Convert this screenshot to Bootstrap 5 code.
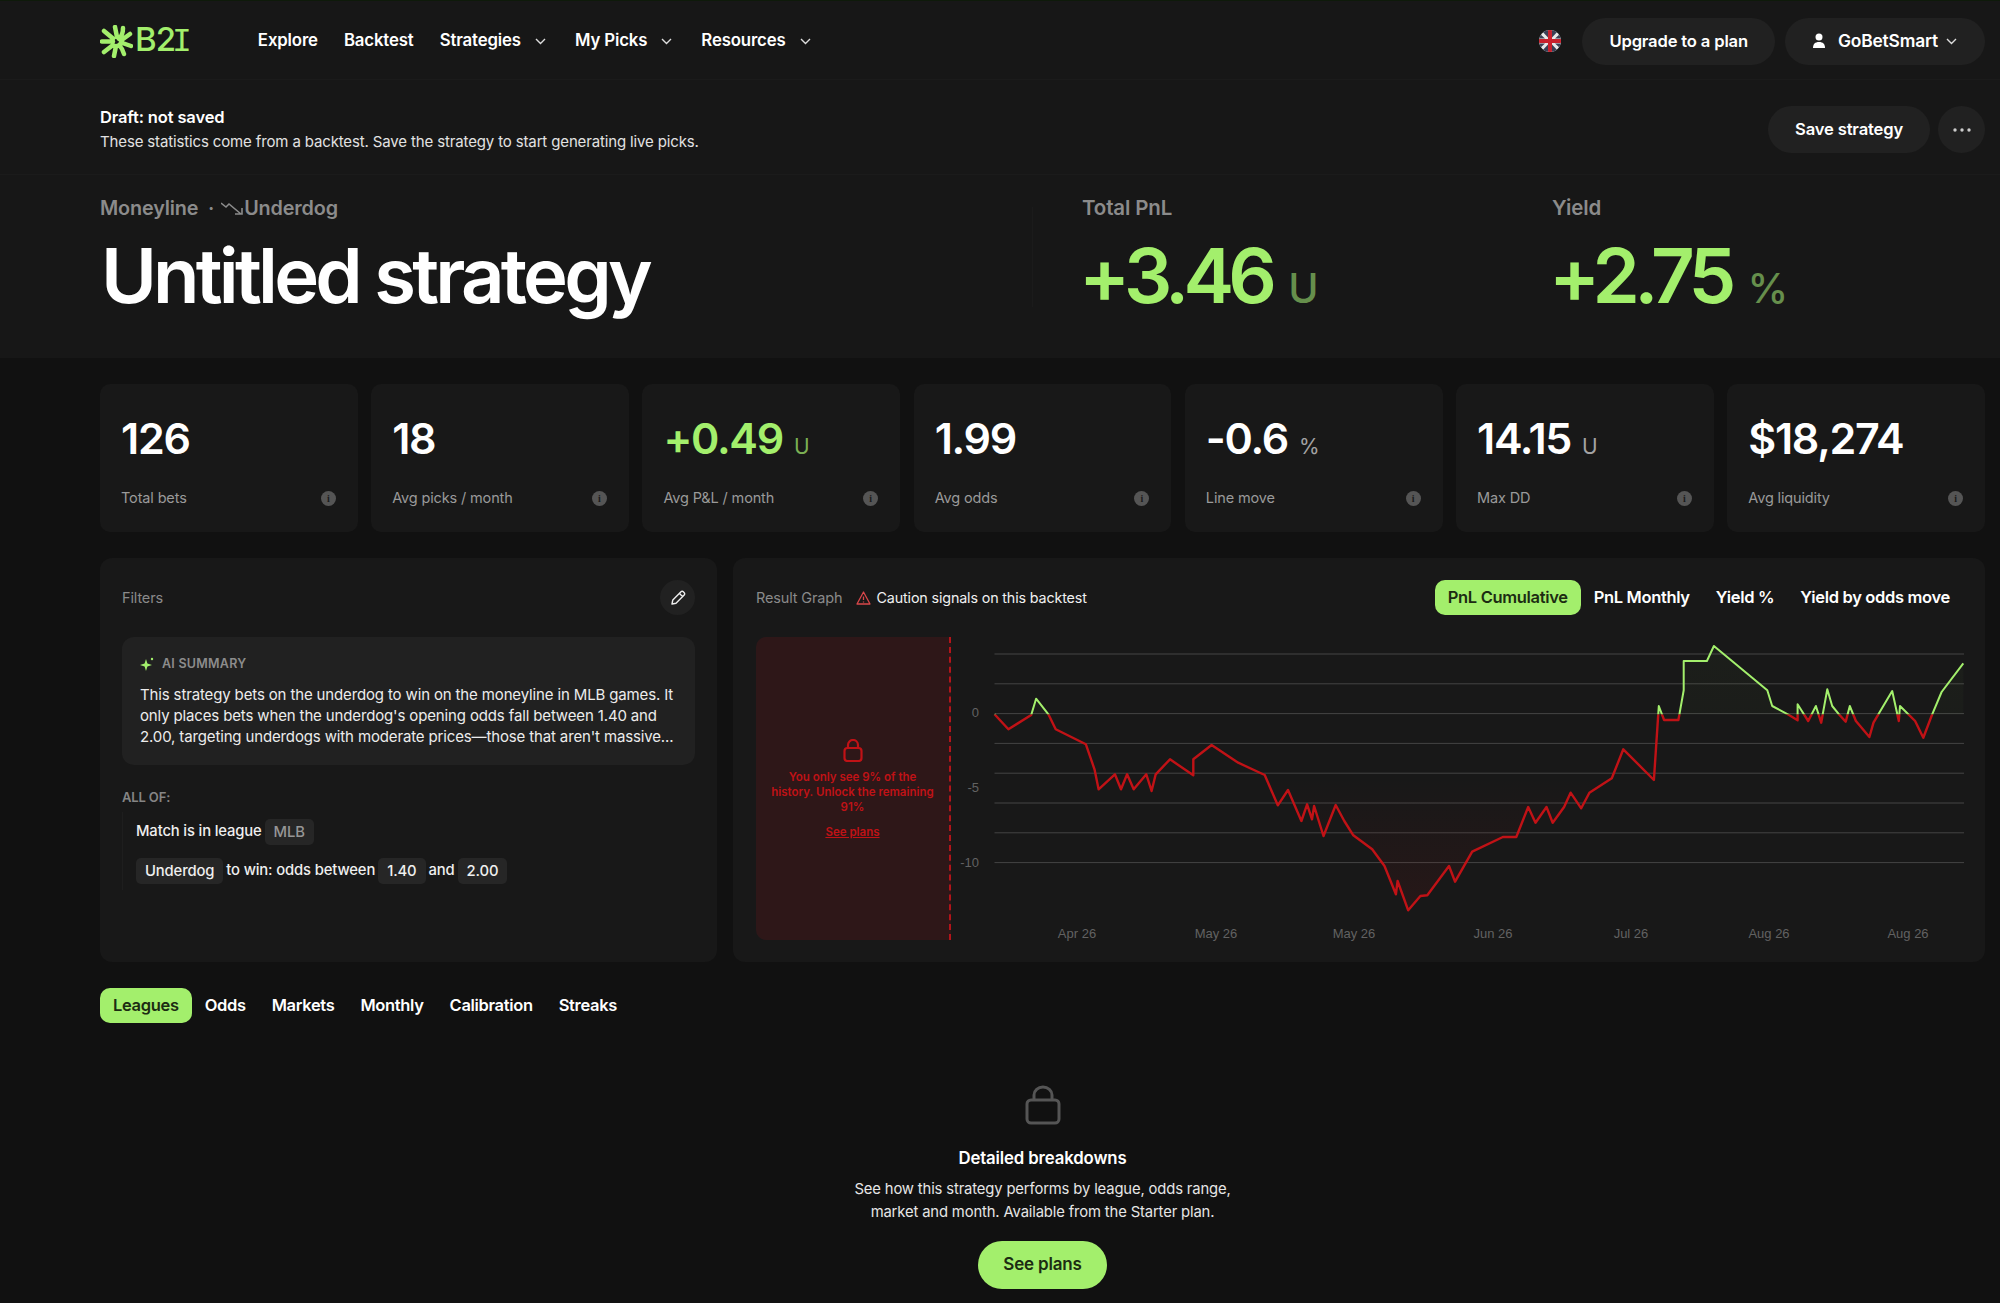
<!DOCTYPE html>
<html lang="en">
<head>
    <meta charset="UTF-8">
    <meta name="viewport" content="width=device-width, initial-scale=1.0">
    <title>Untitled strategy - B2I</title>
    <link href="https://cdn.jsdelivr.net/npm/bootstrap@5.3.3/dist/css/bootstrap.min.css" rel="stylesheet">
    <script src="https://cdn.jsdelivr.net/npm/bootstrap@5.3.3/dist/js/bootstrap.bundle.min.js"></script>
    <style>
        body { background: #111; color: #fff; font-family: Inter, "Liberation Sans", sans-serif; font-size: 14px; letter-spacing: -.01em; }
        .head-zone { background: #171717; border-top: 1px solid #0e1a0a; }
        .top-bar { height: 79px; padding: 2px 15px 0 100px; border-bottom: 1px solid #1b1b1b; flex-wrap: nowrap; }
        .brand-mark { width: 33px; height: 33px; }
        .brand-name { font-size: 33px; font-weight: 500; color: #a3ef6c; letter-spacing: -.03em; line-height: 1; margin-left: 2px; }
        .brand-name span { font-family: "Liberation Mono", monospace; font-weight: 400; margin-left: -3px; }
        .top-links { margin-left: 67px; gap: 26px; }
        .top-link { color: #fff; font-size: 16.8px; font-weight: 600; text-decoration: none; display: flex; align-items: center; gap: 14px; }
        .chev { width: 11px; height: 7px; }
        .top-link .chev { margin-right: 3px; }
        .pill-dark { background: #212121; color: #fff; border: 0; font-size: 16.6px; font-weight: 600; letter-spacing: -.01em; height: 47px; padding: 0 27px; }
        .pill-dark:hover { background: #2a2a2a; color: #fff; }
        .user-btn { margin-left: 10px; padding: 0 28px 0 27px; font-size: 17.4px; }
        .flag-icon { width: 22px; height: 22px; margin-right: 21px; }
        .draft-row { height: 95px; padding: 4px 15px 0 100px; border-bottom: 1px solid #1b1b1b; }
        .draft-title { font-size: 16.5px; font-weight: 600; line-height: 25px; }
        .draft-text { font-size: 15px; color: #e2e2e2; line-height: 23px; }
        .dots-btn { width: 47px; padding: 0; }
        .hero-zone { height: 183px; padding: 20px 15px 0 100px; }
        .hero-left { width: 932px; }
        .hero-right { width: 520px; padding-left: 49px; border-left: 1px solid #1b1b1b; height: 100px; margin-top: 12px; }
        .hero-plain { height: 100px; margin-top: 12px; }
        .hero-label { font-size: 19.8px; font-weight: 600; color: #8b8b8b; line-height: 26px; }
        .hero-right .hero-label, .hero-plain .hero-label { margin-top: -12px; font-size: 20.5px; }
        .hero-title { font-size: 76px; font-weight: 600; letter-spacing: -.05em; line-height: 88px; margin: 10px 0 0 1px; }
        .hero-num { font-size: 76px; font-weight: 600; letter-spacing: -.075em; line-height: 88px; color: #a3ef6c; margin: 10px 0 0 -3px; white-space: nowrap; }
        .hero-unit { font-size: 41px; font-weight: 500; color: #668f4c; letter-spacing: 0; margin-left: 17px; }
        .down-icon { width: 23px; height: 14px; margin: 0 0 0 7px; }
        .page-zone { padding: 26px 15px 0 100px; }
        .stat-row { display: grid; grid-template-columns: repeat(7, 1fr); gap: 13.5px; }
        .stat-box { background: #181818; border-radius: 10px; height: 148px; padding: 29px 21px 0; }
        .stat-num { font-size: 43px; font-weight: 600; letter-spacing: -.03em; line-height: 50px; height: 50px; white-space: nowrap; }
        .stat-num.up { color: #a3ef6c; }
        .stat-unit { font-size: 21px; font-weight: 400; letter-spacing: 0; line-height: 1; color: #a3a3a3; margin-left: 11px; }
        .up .stat-unit { color: #7bb054; }
        .stat-label { font-size: 14.5px; color: #9a9a9a; margin-top: 24px; line-height: 22px; padding-right: 1px; }
        .info-dot { width: 15px; height: 15px; border-radius: 50%; background: #555; color: #1b1b1b; font-size: 10px; font-weight: 800; line-height: 15px; text-align: center; font-family: "Liberation Serif", serif; }
        .panel-row { display: flex; gap: 16px; margin-top: 26px; height: 404px; }
        .panel-box { background: #181818; border-radius: 12px; }
        .filter-panel { width: 617px; padding: 22px 22px 0; flex: none; }
        .graph-panel { flex: 1; padding: 22px 0 0 23px; min-width: 0; }
        .panel-cap { height: 35px; }
        .muted-cap { color: #8a8a8a; font-size: 14.5px; }
        .edit-btn { width: 35px; height: 35px; border-radius: 50%; background: #212121; border: 0; }
        .ai-box { background: #212121; border-radius: 12px; height: 128px; margin-top: 22px; padding: 17px 18px 0; }
        .ai-head { font-size: 12.5px; font-weight: 600; color: #8c8c8c; letter-spacing: .02em; line-height: 20px; gap: 8px; }
        .ai-text { font-size: 15px; line-height: 21px; color: #ececec; margin-top: 10px; white-space: nowrap; }
        .all-of { font-size: 13px; font-weight: 600; color: #858585; margin-top: 23px; line-height: 18px; }
        .cond-list { margin-top: 6px; padding-left: 13px; border-left: 1px solid #1e1e1e; }
        .cond-line { font-weight: 500; font-size: 14.8px; height: 39px; gap: 3px; color: #efefef; }
        .cond-chip { background: #262626; border-radius: 5px; height: 26px; line-height: 26px; padding: 0 9px; }
        .cond-chip.dim { color: #969696; }
        .graph-tab { background: transparent; border: 0; color: #fff; font-size: 16.5px; font-weight: 600; height: 35px; padding: 0 13px; border-radius: 10px; letter-spacing: -.02em; white-space: nowrap; }
        .graph-tab.on { background: #a3ef6c; color: #1c2c12; }
        .graph-tabs { margin-right: 22px; }
        .warn-line { gap: 6px; margin-left: 13px; color: #f0f0f0; font-size: 14.3px; }
        .chart-row { margin-top: 22px; height: 303px; }
        .lock-zone { width: 195px; height: 303px; flex: none; background: #2e1718; border-right: 2px dashed #b3141a; border-radius: 10px 0 0 10px; color: #c01216; font-size: 11.5px; font-weight: 600; line-height: 15px; text-align: center; padding: 102px 12px 0 12px; letter-spacing: 0; }
        .lock-zone a { color: #c01216; display: block; margin-top: 10px; }
        .chart-svg { width: 1034px; height: 325px; flex: none; display: block; }
        .chart-svg text { font-family: "Liberation Sans", sans-serif; font-size: 13px; fill: #626262; letter-spacing: 0; }
        .tab-row { margin-top: 26px; }
        .locked-note { margin: 0 auto; width: 400px; padding-top: 62px; text-align: center; }
        .note-title { font-size: 16.8px; font-weight: 600; margin-top: 21px; line-height: 24px; }
        .note-text { font-size: 14.8px; line-height: 23px; color: #e6e6e6; margin-top: 8px; }
        .plans-btn { background: #a3ef6c; color: #1c2c12; border: 0; height: 48px; width: 129px; font-size: 17px; font-weight: 600; margin-top: 17px; letter-spacing: -.01em; }
        .plans-btn:hover { background: #a3ef6c; color: #1c2c12; }
    </style>
</head>
<body>
    <div class="head-zone">
        <nav class="navbar top-bar">
            <a class="d-flex align-items-center text-decoration-none" href="#">
                <svg class="brand-mark" viewBox="0 0 33 33" fill="none" stroke="#a3ef6c" stroke-width="4.500" stroke-linecap="round" stroke-linejoin="round">
                    <path d="M2 16.500H13M4 6l9 7.500M4 27l9-7M15 2l2 10M23 3c0 5-1 8-4 11M30 9l-9 6.500M31 21l-10-3.500M24 29c-1-4-3-7-5-9M14 31l2-10"/>
                </svg>
                <span class="brand-name">B2<span>I</span></span>
            </a>
            <div class="d-flex align-items-center top-links me-auto">
                <a class="top-link" href="#">Explore</a>
                <a class="top-link" href="#">Backtest</a>
                <a class="top-link" href="#">Strategies <svg class="chev" viewBox="0 0 11 7" fill="none" stroke="#ddd" stroke-width="1.400"><path d="M1 1l4.500 4.500L10 1"/></svg></a>
                <a class="top-link" href="#">My Picks <svg class="chev" viewBox="0 0 11 7" fill="none" stroke="#ddd" stroke-width="1.400"><path d="M1 1l4.500 4.500L10 1"/></svg></a>
                <a class="top-link" href="#">Resources <svg class="chev" viewBox="0 0 11 7" fill="none" stroke="#ddd" stroke-width="1.400"><path d="M1 1l4.500 4.500L10 1"/></svg></a>
            </div>
            <svg class="flag-icon" viewBox="0 0 22 22">
                <clipPath id="flagClip"><circle cx="11" cy="11" r="11"/></clipPath>
                <g clip-path="url(#flagClip)">
                    <rect width="22" height="22" fill="#e8e8e8"/>
                    <path d="M2 0l7 7.500V0zM20 0l-7 7.500V0zM2 22l7-7.500V22zM20 22l-7-7.500V22zM0 3l6 5.500H0zM22 3l-6 5.500h6zM0 19l6-5.500H0zM22 19l-6-5.500h6z" fill="#3a3f55"/>
                    <path d="M9 0h4v9h9v4h-9v9H9v-9H0V9h9z" fill="#c8202c"/>
                </g>
            </svg>
            <button class="btn rounded-pill pill-dark">Upgrade to a plan</button>
            <button class="btn rounded-pill pill-dark user-btn d-flex align-items-center">
                <svg width="14" height="16" viewBox="0 0 14 16" fill="#fff" class="me-2"><circle cx="7" cy="4" r="3.500"/><path d="M1 15c0-4 2-6 6-6s6 2 6 6z"/></svg>
                <span class="ms-1">GoBetSmart</span>
                <svg class="chev ms-2" viewBox="0 0 11 7" fill="none" stroke="#ddd" stroke-width="1.400"><path d="M1 1l4.500 4.500L10 1"/></svg>
            </button>
        </nav>

        <div class="d-flex align-items-center justify-content-between draft-row">
            <div>
                <div class="draft-title">Draft: not saved</div>
                <div class="draft-text">These statistics come from a backtest. Save the strategy to start generating live picks.</div>
            </div>
            <div class="d-flex gap-2 align-items-center">
                <button class="btn rounded-pill pill-dark">Save strategy</button>
                <button class="btn rounded-circle pill-dark dots-btn">
                    <svg width="18" height="4" viewBox="0 0 18 4" fill="#ccc"><circle cx="2" cy="2" r="1.700"/><circle cx="9" cy="2" r="1.700"/><circle cx="16" cy="2" r="1.700"/></svg>
                </button>
            </div>
        </div>

        <div class="d-flex hero-zone">
            <div class="hero-left">
                <div class="hero-label d-flex align-items-center">Moneyline &nbsp;·<svg class="down-icon" viewBox="0 0 23 14" fill="none" stroke="#8b8b8b" stroke-width="1.600"><path d="M0 2l5 4 3-3 12 10M14 13h7V7"/></svg>Underdog</div>
                <h1 class="hero-title">Untitled strategy</h1>
            </div>
            <div class="hero-right">
                <div class="hero-label">Total PnL</div>
                <div class="hero-num">+3.46<span class="hero-unit">U</span></div>
            </div>
            <div class="hero-plain">
                <div class="hero-label">Yield</div>
                <div class="hero-num">+2.75<span class="hero-unit">%</span></div>
            </div>
        </div>
    </div>

    <div class="page-zone">
        <div class="stat-row">
            <div class="stat-box"><div class="stat-num">126</div><div class="d-flex justify-content-between align-items-center stat-label">Total bets<span class="info-dot">i</span></div></div>
            <div class="stat-box"><div class="stat-num">18</div><div class="d-flex justify-content-between align-items-center stat-label">Avg picks / month<span class="info-dot">i</span></div></div>
            <div class="stat-box"><div class="stat-num up">+0.49<span class="stat-unit">U</span></div><div class="d-flex justify-content-between align-items-center stat-label">Avg P&amp;L / month<span class="info-dot">i</span></div></div>
            <div class="stat-box"><div class="stat-num">1.99</div><div class="d-flex justify-content-between align-items-center stat-label">Avg odds<span class="info-dot">i</span></div></div>
            <div class="stat-box"><div class="stat-num">-0.6<span class="stat-unit">%</span></div><div class="d-flex justify-content-between align-items-center stat-label">Line move<span class="info-dot">i</span></div></div>
            <div class="stat-box"><div class="stat-num">14.15<span class="stat-unit">U</span></div><div class="d-flex justify-content-between align-items-center stat-label">Max DD<span class="info-dot">i</span></div></div>
            <div class="stat-box"><div class="stat-num">$18,274</div><div class="d-flex justify-content-between align-items-center stat-label">Avg liquidity<span class="info-dot">i</span></div></div>
        </div>

        <div class="panel-row">
            <div class="panel-box filter-panel">
                <div class="d-flex justify-content-between align-items-center panel-cap">
                    <span class="muted-cap">Filters</span>
                    <button class="edit-btn d-flex align-items-center justify-content-center p-0">
                        <svg width="16" height="16" viewBox="0 0 16 16" fill="none" stroke="#eee" stroke-width="1.400" stroke-linejoin="round"><path d="M2 14l.8-4L11 1.800a1.600 1.600 0 0 1 2.300 0l.9.9a1.600 1.600 0 0 1 0 2.300L6 13.200zM9.500 3.500l3 3"/></svg>
                    </button>
                </div>
                <div class="ai-box">
                    <div class="d-flex align-items-center ai-head">
                        <svg width="14" height="14" viewBox="0 0 14 14" fill="#a3ef6c"><path d="M6 2l1.400 4.600L12 8 7.400 9.400 6 14 4.600 9.400 0 8l4.600-1.400z"/><circle cx="12" cy="2" r="1.200"/></svg>
                        AI SUMMARY
                    </div>
                    <div class="ai-text">This strategy bets on the underdog to win on the moneyline in MLB games. It<br>only places bets when the underdog's opening odds fall between 1.40 and<br>2.00, targeting underdogs with moderate prices—those that aren't massive...</div>
                </div>
                <div class="all-of">ALL OF:</div>
                <div class="cond-list">
                    <div class="d-flex align-items-center cond-line">Match is in league <span class="cond-chip dim">MLB</span></div>
                    <div class="d-flex align-items-center cond-line"><span class="cond-chip">Underdog</span> to win: odds between <span class="cond-chip">1.40</span> and <span class="cond-chip">2.00</span></div>
                </div>
            </div>

            <div class="panel-box graph-panel">
                <div class="d-flex align-items-center panel-cap">
                    <span class="muted-cap">Result Graph</span>
                    <span class="d-flex align-items-center warn-line">
                        <svg width="15" height="14" viewBox="0 0 15 14" fill="none" stroke="#d8474a" stroke-width="1.300" stroke-linejoin="round"><path d="M7.500 1L14 13H1zM7.500 5.500v3.500M7.500 10.500v1"/></svg>
                        Caution signals on this backtest
                    </span>
                    <div class="d-flex ms-auto graph-tabs">
                        <button class="graph-tab on">PnL Cumulative</button>
                        <button class="graph-tab">PnL Monthly</button>
                        <button class="graph-tab">Yield %</button>
                        <button class="graph-tab">Yield by odds move</button>
                    </div>
                </div>
                <div class="d-flex chart-row">
                    <div class="lock-zone">
                        <svg width="20" height="23" viewBox="0 0 20 23" fill="none" stroke="#c01216" stroke-width="2.200" class="d-block mx-auto mb-2"><rect x="1.500" y="9" width="17" height="13" rx="3"/><path d="M5 9V6a5 5 0 0 1 10 0v3"/></svg>
                        You only see 9% of the history. Unlock the remaining 91%
                        <a href="#">See plans</a>
                    </div>
                    <svg class="chart-svg" id="pnlChart" viewBox="951 636 1034 325"></svg>
                </div>
            </div>
        </div>

        <div class="d-flex tab-row">
            <button class="graph-tab on">Leagues</button>
            <button class="graph-tab">Odds</button>
            <button class="graph-tab">Markets</button>
            <button class="graph-tab">Monthly</button>
            <button class="graph-tab">Calibration</button>
            <button class="graph-tab">Streaks</button>
        </div>

        <div class="locked-note">
            <svg width="36" height="40" viewBox="0 0 36 40" fill="none" stroke="#555" stroke-width="3"><rect x="2" y="15" width="32" height="23" rx="4"/><path d="M9 15V10a9 8 0 0 1 18 0v5"/></svg>
            <div class="note-title">Detailed breakdowns</div>
            <div class="note-text">See how this strategy performs by league, odds range,<br>market and month. Available from the Starter plan.</div>
            <button class="btn rounded-pill plans-btn">See plans</button>
        </div>
    </div>

    <script>
        // points read off the chart, as page pixels
        const partA = [[648,280],[682,325],[738,282],[750,233],[780,280],[798,325],[872,370],[893,445],[903,505],[943,460],[958,505],[973,460],[989,505],[1020,460],[1033,510],[1043,460],[1078,415],[1135,463],[1135,415],[1180,372],[1245,425],[1310,462],[1342,553],[1367,507],[1400,600],[1414,550],[1426,595],[1431,555],[1454,645],[1484,552],[1505,600],[1527,643]]
            .map(p => [730 + p[0] / 2.45, 620 + p[1] / 3]);
        const partB = [[30,685],[60,735],[88,820],[92,780],[118,868],[148,825],[165,823],[218,735],[233,782],[275,692],[350,648],[383,648],[412,558],[430,605],[457,558],[472,605],[500,558],[516,515],[542,562],[562,515],[617,472],[645,385],[720,477],[732,255],[745,297],[780,297],[793,208],[793,120],[850,120],[867,75],[998,208],[1010,255],[1048,280],[1072,298],[1072,250],[1098,300],[1117,255],[1130,305],[1145,205],[1157,255],[1172,278],[1190,302],[1200,255],[1215,300],[1248,348],[1258,305],[1270,280],[1304,210],[1320,300],[1323,255],[1360,300],[1380,350],[1402,280],[1425,213],[1478,127]]
            .map(p => [1360 + p[0] / 2.45, 620 + p[1] / 3]);
        const points = partA.concat(partB);
        const line = points.map(p => p[0].toFixed(1) + "," + p[1].toFixed(1)).join(" ");
        const zeroY = 713.4;
        const first = points[0][0], last = points[points.length - 1][0];
        const area = first.toFixed(1) + "," + zeroY + " " + line + " " + last.toFixed(1) + "," + zeroY;

        let svg = `<defs>
            <clipPath id="aboveZero"><rect x="951" y="636" width="1034" height="${zeroY - 636}"/></clipPath>
            <clipPath id="belowZero"><rect x="951" y="${zeroY}" width="1034" height="240"/></clipPath>
            <linearGradient id="upFade" x1="0" y1="0" x2="0" y2="1"><stop offset="0" stop-color="#a3ef6c" stop-opacity=".03"/><stop offset="1" stop-color="#a3ef6c" stop-opacity="0"/></linearGradient>
            <linearGradient id="downFade" x1="0" y1="0" x2="0" y2="1"><stop offset=".5" stop-color="#c01216" stop-opacity="0"/><stop offset="1" stop-color="#c01216" stop-opacity=".09"/></linearGradient>
        </defs>`;
        for (let i = 0; i < 8; i++) {
            let y = 653 + i * 29.8;
            svg += `<line x1="994.500" x2="1964" y1="${y}" y2="${y}" stroke="#444" stroke-width="1"/>`;
        }
        svg += `<polygon points="${area}" fill="url(#upFade)" clip-path="url(#aboveZero)"/>`;
        svg += `<polygon points="${area}" fill="url(#downFade)" clip-path="url(#belowZero)"/>`;
        svg += `<polyline points="${line}" fill="none" stroke="#a3ef6c" stroke-width="2" stroke-linejoin="round" clip-path="url(#aboveZero)"/>`;
        svg += `<polyline points="${line}" fill="none" stroke="#c01216" stroke-width="2.400" stroke-linejoin="round" clip-path="url(#belowZero)"/>`;
        [["0",716],["-5",791],["-10",866]].forEach(t => {
            svg += `<text x="979" y="${t[1]}" text-anchor="end">${t[0]}</text>`;
        });
        [["Apr 26",1077],["May 26",1216],["May 26",1354],["Jun 26",1493],["Jul 26",1631],["Aug 26",1769],["Aug 26",1908]].forEach(t => {
            svg += `<text x="${t[1]}" y="937" text-anchor="middle">${t[0]}</text>`;
        });
        document.getElementById("pnlChart").innerHTML = svg;
    </script>
</body>
</html>
